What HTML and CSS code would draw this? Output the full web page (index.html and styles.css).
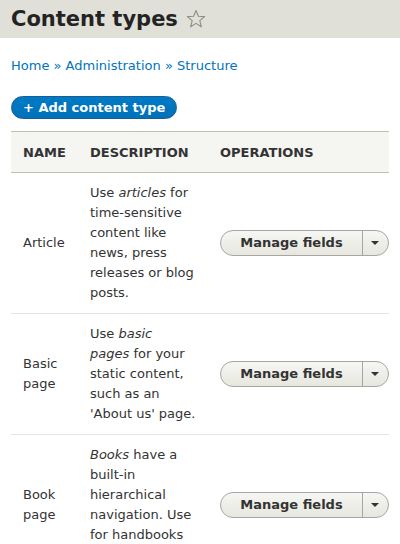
FILE: index.html
```html
<!DOCTYPE html>
<html lang="en">
<head>
    <meta charset="UTF-8">
    <meta name="viewport" content="width=device-width, initial-scale=1.0">
    <title>Content types</title>
    <link rel="stylesheet" href="styles.css">
</head>
<body>
    <div class="page-header">
        <h1>Content types</h1>
        <svg class="shortcut-star" viewBox="0 0 20 20" width="20" height="20">
            <polygon points="10,1.5 12.4,7.3 18.6,7.6 13.8,11.6 15.4,17.8 10,14.4 4.6,17.8 6.2,11.6 1.4,7.6 7.6,7.3" fill="none" stroke="#8e8e86" stroke-width="1.1" stroke-linejoin="round"/>
        </svg>
    </div>

    <div class="content">
        <nav class="breadcrumb">
            <a href="#">Home</a> » <a href="#">Administration</a> » <a href="#">Structure</a>
        </nav>

        <a href="#" class="button-action">+ Add content type</a>

        <table class="content-types">
            <thead>
                <tr>
                    <th class="col-name">Name</th>
                    <th class="col-desc">Description</th>
                    <th class="col-ops">Operations</th>
                </tr>
            </thead>
            <tbody>
                <tr>
                    <td>Article</td>
                    <td class="desc">Use <em>articles</em> for time-sensitive content like news, press releases or blog posts.</td>
                    <td class="ops">
                        <div class="dropbutton">
                            <a href="#" class="dropbutton-main">Manage fields</a>
                            <span class="dropbutton-toggle"><span class="arrow"></span></span>
                        </div>
                    </td>
                </tr>
                <tr>
                    <td>Basic page</td>
                    <td class="desc">Use <em>basic pages</em> for your static content, such as an 'About us' page.</td>
                    <td class="ops">
                        <div class="dropbutton">
                            <a href="#" class="dropbutton-main">Manage fields</a>
                            <span class="dropbutton-toggle"><span class="arrow"></span></span>
                        </div>
                    </td>
                </tr>
                <tr>
                    <td>Book page</td>
                    <td class="desc"><em>Books</em> have a built-in hierarchical navigation. Use for handbooks or tutorials.</td>
                    <td class="ops">
                        <div class="dropbutton">
                            <a href="#" class="dropbutton-main">Manage fields</a>
                            <span class="dropbutton-toggle"><span class="arrow"></span></span>
                        </div>
                    </td>
                </tr>
            </tbody>
        </table>
    </div>
</body>
</html>
```

FILE: styles.css
```css
body {
    font-family: 'DejaVu Sans', 'Noto Sans', sans-serif;
    font-size: 13px;
    color: #222;
    background: #fff;
    margin: 0;
}

a {
    color: #0074bd;
    text-decoration: none;
}

.page-header {
    background: #e0e0d8;
    height: 38px;
    padding: 0 11px;
    display: flex;
    align-items: center;
    gap: 8px;
}

h1 {
    font-size: 21px;
    font-weight: bold;
    color: #232323;
    margin: 0;
}

.shortcut-star {
    margin-top: -1px;
}

.content {
    padding: 0 11px;
}

.breadcrumb {
    margin-top: 20px;
    line-height: 16px;
    color: #0074bd;
}

.button-action {
    display: inline-block;
    margin-top: 22px;
    padding: 0 11px;
    height: 21px;
    line-height: 21px;
    border-radius: 12px;
    background: linear-gradient(#007bc6, #0071b8);
    border: 1px solid #1e5c90;
    color: #fff;
    font-weight: bold;
}

.content-types {
    width: 378px;
    margin-top: 12px;
    border-collapse: collapse;
    table-layout: fixed;
}

.content-types th {
    background: #f5f5f2;
    border-top: 1px solid #bfbfba;
    border-bottom: 1px solid #bfbfba;
    text-transform: uppercase;
    text-align: left;
    font-weight: bold;
    color: #333;
    padding: 0 12px;
    height: 40px;
}

.col-name {
    width: 43px;
}

.content-types th.col-desc {
    width: 105.5px;
    padding-right: 12.5px;
}

.content-types td {
    padding: 10px 12px;
    line-height: 20px;
    border-bottom: 1px solid #e6e4df;
    color: #333;
    vertical-align: middle;
}

.content-types td.desc {
    padding-right: 12.5px;
}

.content-types td.ops {
    padding-right: 0;
}

.dropbutton {
    display: flex;
    height: 24px;
    border: 1px solid #a6a6a6;
    border-radius: 13px;
    background: linear-gradient(#f6f6f3, #e7e7df);
    overflow: hidden;
}

.dropbutton-main {
    flex: 1;
    text-align: center;
    line-height: 24px;
    font-weight: bold;
    color: #333;
}

.dropbutton-toggle {
    width: 25px;
    border-left: 1px solid #a6a6a6;
    display: flex;
    align-items: center;
    justify-content: center;
}

.dropbutton-toggle .arrow {
    width: 0;
    height: 0;
    border-left: 4px solid transparent;
    border-right: 4px solid transparent;
    border-top: 4px solid #333;
    margin-right: 2px;
}
```
